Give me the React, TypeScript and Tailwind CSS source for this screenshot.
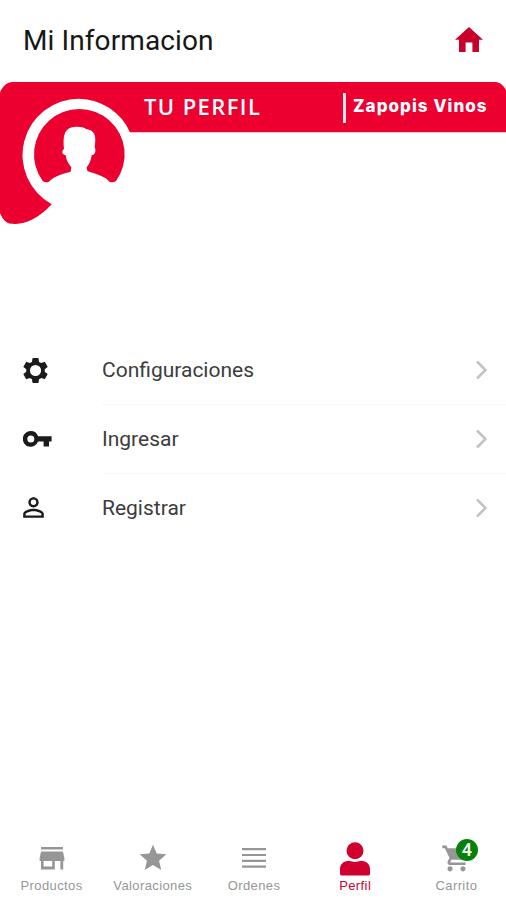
import type { ReactNode } from "react";
import { MdPersonOutline, MdShoppingCart, MdStar } from "react-icons/md";

function ProfileBanner() {
  return (
    <section className="relative h-[165px] w-full">
      <svg className="absolute inset-0" width="506" height="165" viewBox="0 0 1518 495" fill="#ec0030">
        <path d="M0 53C6 38 18 21 38 21H1485C1502 21 1512 34 1518 46V172H390A171 171 0 0 0 237 71A169 169 0 0 0 155 388C120 428 75 448 45 447C20 447 12 440 0 415Z" />
        <path d="M128 318A136 136 0 1 1 348 318Q340 324 328 320C318 305 290 298 262 288L260 277C268 268 273 255 275 241C284 240 287 232 286 222L284 217C289 185 286 165 258 162C250 154 225 154 212 158C193 165 188 185 192 222C186 225 183 238 197 241C199 255 204 265 214 277L212 290C180 298 160 306 147 320Q136 324 128 318Z" />
      </svg>
      <div className="relative flex h-[64px] items-center pl-[144px] text-white">
        <h2 className="w-[199px] pb-[3px] font-['Open_Sans',sans-serif] text-[22px] leading-none font-semibold tracking-[1.4px]">TU PERFIL</h2>
        <span className="mt-[2px] h-[30px] w-[3px] bg-white/90" />
        <span className="ml-[7px] pb-[1px] font-['Inter',sans-serif] text-[17px] leading-none font-extrabold tracking-[1.05px] whitespace-nowrap">Zapopis Vinos</span>
      </div>
    </section>
  );
}

function HomeIcon() {
  return (
    <svg width="28" height="25" viewBox="0 0 28 25" fill="#c9002b" className="mt-[4px]">
      <path d="M14 0L28 12.8H24V25H17.4V15.4H10.6V25H4V12.8H0Z" />
    </svg>
  );
}

function GearIcon() {
  return (
    <svg width="31" height="31" viewBox="0 0 24 24" fill="currentColor" fillRule="evenodd" className="ml-[20px]">
      <path d="M19.14 12.94c.04-.3.06-.61.06-.94 0-.32-.02-.64-.07-.94l2.03-1.58c.18-.14.23-.41.12-.61l-1.92-3.32c-.12-.22-.37-.29-.59-.22l-2.39.96c-.5-.38-1.03-.7-1.62-.94l-.36-2.54c-.04-.24-.24-.41-.48-.41h-3.84c-.24 0-.43.17-.47.41l-.36 2.54c-.59.24-1.13.57-1.62.94l-2.39-.96c-.22-.08-.47 0-.59.22L2.74 8.87c-.12.21-.08.47.12.61l2.03 1.58c-.05.3-.09.63-.09.94s.02.64.07.94l-2.03 1.58c-.18.14-.23.41-.12.61l1.92 3.32c.12.22.37.29.59.22l2.39-.96c.5.38 1.03.7 1.62.94l.36 2.54c.05.24.24.41.48.41h3.84c.24 0 .44-.17.47-.41l.36-2.54c.59-.24 1.13-.56 1.62-.94l2.39.96c.22.08.47 0 .59-.22l1.92-3.32c.12-.22.07-.47-.12-.61zM12 16.3A4.3 4.3 0 1 1 12 7.7A4.3 4.3 0 1 1 12 16.3Z" />
    </svg>
  );
}

function KeyIcon() {
  return (
    <svg width="29" height="16" viewBox="0 0 29 16" fill="currentColor" fillRule="evenodd" className="mb-[2px] ml-[23px]">
      <path d="M7.8 0A7.9 7.9 0 0 1 15.1 5.2H28.6V10.6H26V15.6H20.6V10.6H15.1A7.9 7.9 0 1 1 7.8 0ZM7.8 4.4A3.5 3.5 0 1 0 7.8 11.4A3.5 3.5 0 1 0 7.8 4.4Z" />
    </svg>
  );
}

function StoreIcon() {
  return (
    <svg width="26" height="23" viewBox="0 0 26 23" fill="currentColor" fillRule="evenodd">
      <path d="M2 0H24V2.6H2ZM2 4.6H24L25.4 11.5V14H24.2V22.5H21.4V14H15.8V22.5H2V14H.6V11.5ZM4.6 14V19.6H13.2V14Z" />
    </svg>
  );
}

function MenuRow({ icon, label, last = false }: { icon: ReactNode; label: string; last?: boolean }) {
  return (
    <li className="flex h-[69px] items-center">
      <span className="flex w-[102px] shrink-0 text-[#1b1b1b]">{icon}</span>
      <span className={`flex h-full flex-1 items-center justify-between pr-[19px] ${last ? "" : "border-b border-[#f8f8f8]"}`}>
        <span className={`text-[21px] text-[#3c3c3c] ${last ? "" : "pt-[2px]"}`}>{label}</span>
        <svg width="12" height="20" viewBox="0 0 12 20" fill="none" stroke="#c3c3c3" strokeWidth="2.6" className={last ? "mb-[2px]" : ""}>
          <path d="M2 1.5L10.5 10L2 18.5" />
        </svg>
      </span>
    </li>
  );
}

function Tab({ icon, label, active = false }: { icon: ReactNode; label: string; active?: boolean }) {
  return (
    <div className={`flex flex-col items-center ${active ? "text-[#d0002f]" : "text-[#969696]"}`}>
      <span className="flex h-[36px] items-center">{icon}</span>
      <span className="mt-[2px] font-['Liberation_Sans',sans-serif] text-[13px] leading-[16px] tracking-[0.4px]">{label}</span>
    </div>
  );
}

export default function App() {
  return (
    <main className="flex h-[900px] w-[506px] flex-col overflow-hidden bg-white font-['Roboto',sans-serif]">
      <header className="flex h-[75px] items-center justify-between pr-[23px] pb-[1px] pl-[23px]">
        <h1 className="pt-[7px] text-[28px] tracking-[0.1px] text-[#171717]">Mi Informacion</h1>
        <HomeIcon />
      </header>
      <ProfileBanner />
      <ul className="mt-[96px]">
        <MenuRow label="Configuraciones" icon={<GearIcon />} />
        <MenuRow label="Ingresar" icon={<KeyIcon />} />
        <MenuRow label="Registrar" last icon={<MdPersonOutline size={31} className="mb-[2px] ml-[18px]" />} />
      </ul>
      <nav className="mt-auto -mr-[1px] grid h-[60px] grid-cols-5 pl-[1px]">
        <Tab label="Productos" icon={<StoreIcon />} />
        <Tab label="Valoraciones" icon={<MdStar size={32} />} />
        <Tab
          label="Ordenes"
          icon={
            <svg width="24" height="20" viewBox="0 0 24 20" fill="currentColor">
              <path d="M0 0H24V2.2H0ZM0 5.9H24V8.1H0ZM0 11.7H24V13.9H0ZM0 17.5H24V19.7H0Z" />
            </svg>
          }
        />
        <Tab
          label="Perfil"
          active
          icon={
            <svg width="30" height="34" viewBox="0 0 30 34" fill="currentColor" className="mt-[2px]">
              <circle cx="15" cy="8.7" r="8.5" />
              <path d="M0 32V27C0 22 4 19 9 18.8Q15 21 21 18.8C26 19 30 22 30 27V32Q30 33.6 28 33.6H2Q0 33.6 0 32Z" />
            </svg>
          }
        />
        <Tab
          label="Carrito"
          icon={
            <span className="relative">
              <MdShoppingCart size={31} />
              <span className="absolute -top-[4px] left-[15px] flex h-[22px] w-[22px] items-center justify-center rounded-full bg-[#078207] text-[18px] font-medium text-white">4</span>
            </span>
          }
        />
      </nav>
    </main>
  );
}
